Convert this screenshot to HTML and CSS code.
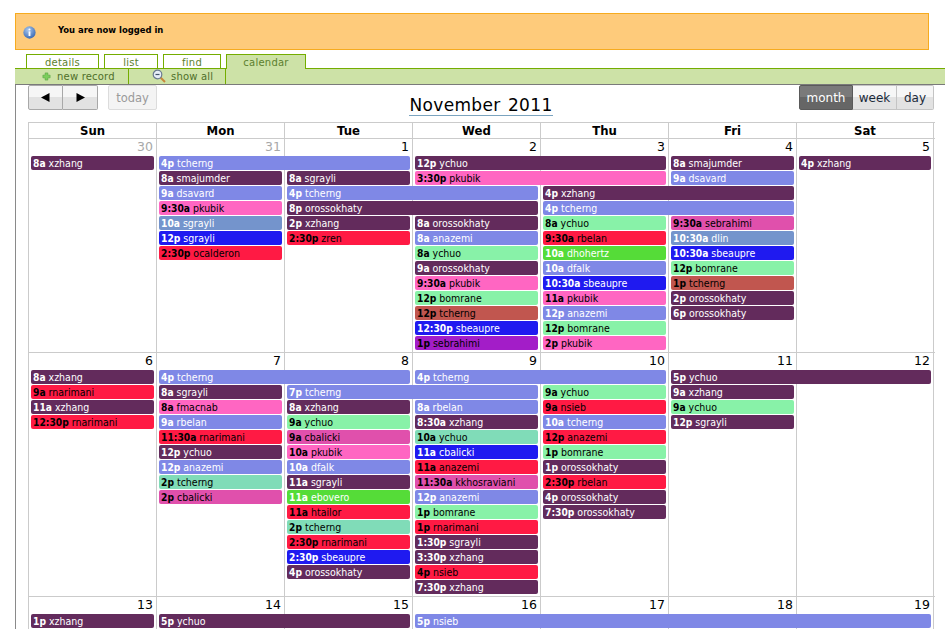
FILE: index.html
```html
<!DOCTYPE html>
<html lang="en">
<head>
<meta charset="utf-8">
<title>Calendar</title>
<link rel="stylesheet" href="styles.css">
</head>
<body>
<div class="page">
  <div class="notice">
    <svg class="info" viewBox="0 0 14 14" width="13" height="13" aria-hidden="true">
      <defs><radialGradient id="ig" cx="0.4" cy="0.3" r="0.8"><stop offset="0" stop-color="#a9c8ee"/><stop offset="1" stop-color="#2c5fae"/></radialGradient></defs>
      <circle cx="7" cy="7" r="6.6" fill="url(#ig)"/>
      <circle cx="7" cy="3.8" r="1.1" fill="#fff"/>
      <rect x="6" y="5.8" width="2" height="5" fill="#fff"/>
    </svg>
    <span class="notice-text">You are now logged in</span>
  </div>
  <nav class="tabs">
    <a class="tab t-details">details</a>
    <a class="tab t-list">list</a>
    <a class="tab t-find">find</a>
    <a class="tab t-calendar active">calendar</a>
  </nav>
  <div class="subbar">
    <a class="subitem s-new">
      <svg viewBox="0 0 10 10" width="9" height="9" aria-hidden="true"><path d="M3.5 1h3v2.5H9v3H6.500V9h-3V6.500H1v-3h2.500z" fill="#7ccf5c" stroke="#4f9e3c" stroke-width=".6"/></svg>
      new record
    </a>
    <a class="subitem s-all">
      <svg viewBox="0 0 14 14" width="14" height="14" aria-hidden="true"><path d="M8.500 8.500L13 13" stroke="#c8863a" stroke-width="2"/><circle cx="5.500" cy="5.500" r="4.300" fill="#e6eef8" stroke="#6a7a90" stroke-width="1.200"/><path d="M3.500 5.500h4" stroke="#41536b" stroke-width="1.200"/></svg>
      show all
    </a>
  </div>
  <main class="content">
    <div class="toolbar">
      <div class="tool-left">
        <div class="btn-group">
          <button class="btn arrow"><svg viewBox="0 0 9 9" width="9" height="9" aria-hidden="true"><path d="M8.500 0v9L0 4.500z" fill="#000"/></svg></button>
          <button class="btn arrow"><svg viewBox="0 0 9 9" width="9" height="9" aria-hidden="true"><path d="M.5 0v9L9 4.500z" fill="#000"/></svg></button>
        </div>
        <button class="btn today">today</button>
      </div>
      <h1 class="title">November 2011</h1>
      <div class="tool-right">
        <div class="btn-group">
          <button class="btn view selected">month</button>
          <button class="btn view">week</button>
          <button class="btn view">day</button>
        </div>
      </div>
    </div>
    <div class="month">
      <div class="head">
        <div class="hcell">Sun</div><div class="hcell">Mon</div><div class="hcell">Tue</div><div class="hcell">Wed</div><div class="hcell">Thu</div><div class="hcell">Fri</div><div class="hcell">Sat</div>
      </div>

      <div class="week w13">
        <div class="cell c1 other">30</div><div class="cell c2 other">31</div><div class="cell c3">1</div><div class="cell c4">2</div><div class="cell c5">3</div><div class="cell c6">4</div><div class="cell c7">5</div>
        <div class="ev plum c1 r1"><b>8a</b> xzhang</div>

        <div class="ev peri c2 r1 span2"><b>4p</b> tcherng</div>
        <div class="ev plum c2 r2"><b>8a</b> smajumder</div>
        <div class="ev peri c2 r3"><b>9a</b> dsavard</div>
        <div class="ev pink c2 r4"><b>9:30a</b> pkubik</div>
        <div class="ev steel c2 r5"><b>10a</b> sgrayli</div>
        <div class="ev blue c2 r6"><b>12p</b> sgrayli</div>
        <div class="ev red c2 r7"><b>2:30p</b> ocalderon</div>

        <div class="ev plum c3 r2"><b>8a</b> sgrayli</div>
        <div class="ev peri c3 r3 span2"><b>4p</b> tcherng</div>
        <div class="ev plum c3 r4 span2"><b>8p</b> orossokhaty</div>
        <div class="ev plum c3 r5"><b>2p</b> xzhang</div>
        <div class="ev red c3 r6"><b>2:30p</b> zren</div>

        <div class="ev plum c4 r1 span2"><b>12p</b> ychuo</div>
        <div class="ev pink c4 r2 span2"><b>3:30p</b> pkubik</div>
        <div class="ev plum c4 r5"><b>8a</b> orossokhaty</div>
        <div class="ev peri c4 r6"><b>8a</b> anazemi</div>
        <div class="ev mint c4 r7"><b>8a</b> ychuo</div>
        <div class="ev plum c4 r8"><b>9a</b> orossokhaty</div>
        <div class="ev pink c4 r9"><b>9:30a</b> pkubik</div>
        <div class="ev mint c4 r10"><b>12p</b> bomrane</div>
        <div class="ev brown c4 r11"><b>12p</b> tcherng</div>
        <div class="ev blue c4 r12"><b>12:30p</b> sbeaupre</div>
        <div class="ev violet c4 r13"><b>1p</b> sebrahimi</div>

        <div class="ev plum c5 r3 span2"><b>4p</b> xzhang</div>
        <div class="ev peri c5 r4 span2"><b>4p</b> tcherng</div>
        <div class="ev mint c5 r5"><b>8a</b> ychuo</div>
        <div class="ev red c5 r6"><b>9:30a</b> rbelan</div>
        <div class="ev lime c5 r7"><b>10a</b> dhohertz</div>
        <div class="ev peri c5 r8"><b>10a</b> dfalk</div>
        <div class="ev blue c5 r9"><b>10:30a</b> sbeaupre</div>
        <div class="ev pink c5 r10"><b>11a</b> pkubik</div>
        <div class="ev peri c5 r11"><b>12p</b> anazemi</div>
        <div class="ev mint c5 r12"><b>12p</b> bomrane</div>
        <div class="ev pink c5 r13"><b>2p</b> pkubik</div>

        <div class="ev plum c6 r1"><b>8a</b> smajumder</div>
        <div class="ev peri c6 r2"><b>9a</b> dsavard</div>
        <div class="ev magenta c6 r5"><b>9:30a</b> sebrahimi</div>
        <div class="ev steel c6 r6"><b>10:30a</b> dlin</div>
        <div class="ev blue c6 r7"><b>10:30a</b> sbeaupre</div>
        <div class="ev mint c6 r8"><b>12p</b> bomrane</div>
        <div class="ev brown c6 r9"><b>1p</b> tcherng</div>
        <div class="ev plum c6 r10"><b>2p</b> orossokhaty</div>
        <div class="ev plum c6 r11"><b>6p</b> orossokhaty</div>

        <div class="ev plum c7 r1"><b>4p</b> xzhang</div>
      </div>

      <div class="week w15">
        <div class="cell c1">6</div><div class="cell c2">7</div><div class="cell c3">8</div><div class="cell c4">9</div><div class="cell c5">10</div><div class="cell c6">11</div><div class="cell c7">12</div>
        <div class="ev plum c1 r1"><b>8a</b> xzhang</div>
        <div class="ev red c1 r2"><b>9a</b> rnarimani</div>
        <div class="ev plum c1 r3"><b>11a</b> xzhang</div>
        <div class="ev red c1 r4"><b>12:30p</b> rnarimani</div>

        <div class="ev peri c2 r1 span2"><b>4p</b> tcherng</div>
        <div class="ev plum c2 r2"><b>8a</b> sgrayli</div>
        <div class="ev pink c2 r3"><b>8a</b> fmacnab</div>
        <div class="ev peri c2 r4"><b>9a</b> rbelan</div>
        <div class="ev red c2 r5"><b>11:30a</b> rnarimani</div>
        <div class="ev plum c2 r6"><b>12p</b> ychuo</div>
        <div class="ev peri c2 r7"><b>12p</b> anazemi</div>
        <div class="ev teal c2 r8"><b>2p</b> tcherng</div>
        <div class="ev magenta c2 r9"><b>2p</b> cbalicki</div>

        <div class="ev peri c3 r2 span2"><b>7p</b> tcherng</div>
        <div class="ev plum c3 r3"><b>8a</b> xzhang</div>
        <div class="ev mint c3 r4"><b>9a</b> ychuo</div>
        <div class="ev magenta c3 r5"><b>9a</b> cbalicki</div>
        <div class="ev pink c3 r6"><b>10a</b> pkubik</div>
        <div class="ev peri c3 r7"><b>10a</b> dfalk</div>
        <div class="ev plum c3 r8"><b>11a</b> sgrayli</div>
        <div class="ev lime c3 r9"><b>11a</b> ebovero</div>
        <div class="ev red c3 r10"><b>11a</b> htailor</div>
        <div class="ev teal c3 r11"><b>2p</b> tcherng</div>
        <div class="ev red c3 r12"><b>2:30p</b> rnarimani</div>
        <div class="ev blue c3 r13"><b>2:30p</b> sbeaupre</div>
        <div class="ev plum c3 r14"><b>4p</b> orossokhaty</div>

        <div class="ev peri c4 r1 span2"><b>4p</b> tcherng</div>
        <div class="ev peri c4 r3"><b>8a</b> rbelan</div>
        <div class="ev plum c4 r4"><b>8:30a</b> xzhang</div>
        <div class="ev teal c4 r5"><b>10a</b> ychuo</div>
        <div class="ev blue c4 r6"><b>11a</b> cbalicki</div>
        <div class="ev red c4 r7"><b>11a</b> anazemi</div>
        <div class="ev magenta c4 r8"><b>11:30a</b> kkhosraviani</div>
        <div class="ev peri c4 r9"><b>12p</b> anazemi</div>
        <div class="ev mint c4 r10"><b>1p</b> bomrane</div>
        <div class="ev red c4 r11"><b>1p</b> rnarimani</div>
        <div class="ev plum c4 r12"><b>1:30p</b> sgrayli</div>
        <div class="ev plum c4 r13"><b>3:30p</b> xzhang</div>
        <div class="ev red c4 r14"><b>4p</b> nsieb</div>
        <div class="ev plum c4 r15"><b>7:30p</b> xzhang</div>

        <div class="ev mint c5 r2"><b>9a</b> ychuo</div>
        <div class="ev red c5 r3"><b>9a</b> nsieb</div>
        <div class="ev peri c5 r4"><b>10a</b> tcherng</div>
        <div class="ev red c5 r5"><b>12p</b> anazemi</div>
        <div class="ev mint c5 r6"><b>1p</b> bomrane</div>
        <div class="ev plum c5 r7"><b>1p</b> orossokhaty</div>
        <div class="ev red c5 r8"><b>2:30p</b> rbelan</div>
        <div class="ev plum c5 r9"><b>4p</b> orossokhaty</div>
        <div class="ev plum c5 r10"><b>7:30p</b> orossokhaty</div>

        <div class="ev plum c6 r1 span2"><b>5p</b> ychuo</div>
        <div class="ev plum c6 r2"><b>9a</b> xzhang</div>
        <div class="ev mint c6 r3"><b>9a</b> ychuo</div>
        <div class="ev plum c6 r4"><b>12p</b> sgrayli</div>
      </div>

      <div class="week w13">
        <div class="cell c1">13</div><div class="cell c2">14</div><div class="cell c3">15</div><div class="cell c4">16</div><div class="cell c5">17</div><div class="cell c6">18</div><div class="cell c7">19</div>
        <div class="ev plum c1 r1"><b>1p</b> xzhang</div>
        <div class="ev plum c2 r1 span2"><b>5p</b> ychuo</div>
        <div class="ev peri c4 r1 span4"><b>5p</b> nsieb</div>
      </div>
    </div>
  </main>
</div>
</body>
</html>
```

FILE: styles.css
```css
html, body {
  margin: 0;
  height: 629px;
  overflow: hidden;
  background: #fff;
}
body {
  font-family: "DejaVu Sans", "Liberation Sans", sans-serif;
  color: #000;
}
.page {
  padding: 13px 0 0 15px;
}

/* notice */
.notice {
  box-sizing: border-box;
  width: 914px;
  height: 37px;
  border: 1px solid #f6ab1f;
  background: #fecb7b;
  display: flex;
  align-items: flex-start;
}
.info {
  margin: 12px 0 0 7px;
}
.notice-text {
  margin: 10px 0 0 22px;
  font-family: "DejaVu Sans Condensed", "DejaVu Sans", sans-serif;
  font-size: 9.400px;
  font-weight: bold;
  line-height: 12px;
}

/* tabs */
.tabs {
  display: flex;
  align-items: flex-end;
  height: 14px;
  margin: 4px 0 0 11px;
  position: relative;
  z-index: 1;
}
.tab {
  box-sizing: border-box;
  height: 14px;
  margin-right: 5px;
  border: 1px solid #74ad00;
  border-bottom: 0;
  background: #fff;
  color: #5c7f2e;
  font-size: 10px;
  line-height: 15px;
  text-align: center;
  letter-spacing: .25px;
}
.t-details { width: 73px; }
.t-list { width: 54px; }
.t-find { width: 58px; }
.t-calendar { width: 80px; }
.tab.active {
  height: 15px;
  margin-bottom: -1px;
  background: #cde2a7;
}

/* green sub bar */
.subbar {
  box-sizing: border-box;
  height: 17px;
  border-top: 1px solid #74ad00;
  border-bottom: 1px solid #7a7a7a;
  background: #cde2a7;
  display: flex;
}
.subitem {
  box-sizing: border-box;
  display: flex;
  align-items: center;
  height: 15px;
  padding-bottom: 1px;
  border-right: 1px solid #74ad00;
  color: #4f6f2a;
  font-size: 10px;
  letter-spacing: .2px;
}
.s-new {
  width: 114px;
  padding-left: 27px;
  gap: 6px;
}
.s-all {
  width: 97px;
  padding-left: 23px;
  gap: 5px;
}

/* calendar area */
.content {
  border-left: 1px solid #8a8a8a;
  padding-left: 12px;
}
.toolbar {
  width: 906px;
  height: 37px;
  display: grid;
  grid-template-columns: 1fr auto 1fr;
  align-items: start;
}
.tool-left {
  display: flex;
  gap: 10px;
}
.tool-right {
  display: flex;
  justify-content: flex-end;
}
.btn-group {
  display: flex;
}
.btn {
  box-sizing: border-box;
  margin: 0;
  padding: 0;
  height: 25px;
  border: 1px solid #c4c4c4;
  border-left-width: 0;
  background: linear-gradient(#f6f6f6 0, #f6f6f6 50%, #e2e2e2 50%, #e2e2e2 100%);
  color: #1a2a3a;
  font-family: "DejaVu Sans", "Liberation Sans", sans-serif;
  font-size: 12px;
  display: flex;
  align-items: center;
  justify-content: center;
}
.btn-group .btn:first-child {
  border-left-width: 1px;
  border-top-left-radius: 2px;
  border-bottom-left-radius: 2px;
}
.btn-group .btn:last-child {
  border-top-right-radius: 2px;
  border-bottom-right-radius: 2px;
}
.arrow {
  width: 35px;
  border-color: #a8a8a8;
}
.today {
  width: 49px;
  border: 1px solid #dcdcdc;
  border-radius: 2px;
  background: #f4f4f4;
  color: #9a9a9a;
  font-size: 11.500px;
}
.view {
  width: 44px;
}
.view:nth-child(3) { width: 37px; }
.view.selected {
  width: 54px;
  border-color: #5a5a5a;
  background: linear-gradient(#7a7a7a 0, #7a7a7a 50%, #666 50%, #666 100%);
  color: #fff;
}
.title {
  margin: 9px 0 0;
  height: 21px;
  border-bottom: 1px solid #7ba4bf;
  font-size: 17px;
  font-weight: normal;
  line-height: 23px;
  letter-spacing: .35px;
  word-spacing: 1.500px;
  color: #000;
}

/* month grid */
.month {
  width: 906px;
  border-left: 1px solid #cbcbcb;
  border-top: 1px solid #cbcbcb;
}
.head, .week {
  display: grid;
  grid-template-columns: repeat(6, 128px) 137px;
  border-bottom: 1px solid #cbcbcb;
}
.hcell {
  height: 15px;
  border-right: 1px solid #cbcbcb;
  font-size: 11.700px;
  font-weight: bold;
  line-height: 16px;
  text-align: center;
}
.w13 { grid-template-rows: 17px repeat(13, 15px) 1px; }
.w15 { grid-template-rows: 17px repeat(15, 15px) 1px; }
.cell {
  grid-row: 1 / -1;
  border-right: 1px solid #cbcbcb;
  padding: 0 3px 0 0;
  font-size: 12.500px;
  line-height: 15px;
  text-align: right;
}
.other { color: #a8a8a8; }

.c1 { grid-column-start: 1; }
.c2 { grid-column-start: 2; }
.c3 { grid-column-start: 3; }
.c4 { grid-column-start: 4; }
.c5 { grid-column-start: 5; }
.c6 { grid-column-start: 6; }
.c7 { grid-column-start: 7; }
.span2 { grid-column-end: span 2; }
.span4 { grid-column-end: span 4; }
.r1 { grid-row-start: 2; }
.r2 { grid-row-start: 3; }
.r3 { grid-row-start: 4; }
.r4 { grid-row-start: 5; }
.r5 { grid-row-start: 6; }
.r6 { grid-row-start: 7; }
.r7 { grid-row-start: 8; }
.r8 { grid-row-start: 9; }
.r9 { grid-row-start: 10; }
.r10 { grid-row-start: 11; }
.r11 { grid-row-start: 12; }
.r12 { grid-row-start: 13; }
.r13 { grid-row-start: 14; }
.r14 { grid-row-start: 15; }
.r15 { grid-row-start: 16; }

.ev {
  height: 14px;
  margin: 0 3px 0 2px;
  padding-left: 2px;
  border-radius: 2px;
  font-family: "DejaVu Sans Condensed", "DejaVu Sans", sans-serif;
  font-size: 10.500px;
  line-height: 15px;
  white-space: nowrap;
  overflow: hidden;
}
.ev b {
  font-size: 10.200px;
  font-weight: bold;
}

.plum { background: #632b5c; color: #fff; }
.peri { background: #7f88e6; color: #fff; }
.pink { background: #ff66c2; color: #000; }
.steel { background: #7494cc; color: #fff; }
.blue { background: #1f1af0; color: #fff; }
.red { background: #ff1a44; color: #000; }
.mint { background: #88f2a8; color: #000; }
.brown { background: #c1564f; color: #000; }
.violet { background: #a31dc8; color: #000; }
.lime { background: #55dc38; color: #fff; }
.teal { background: #80dcb8; color: #000; }
.magenta { background: #e050ac; color: #000; }
```
